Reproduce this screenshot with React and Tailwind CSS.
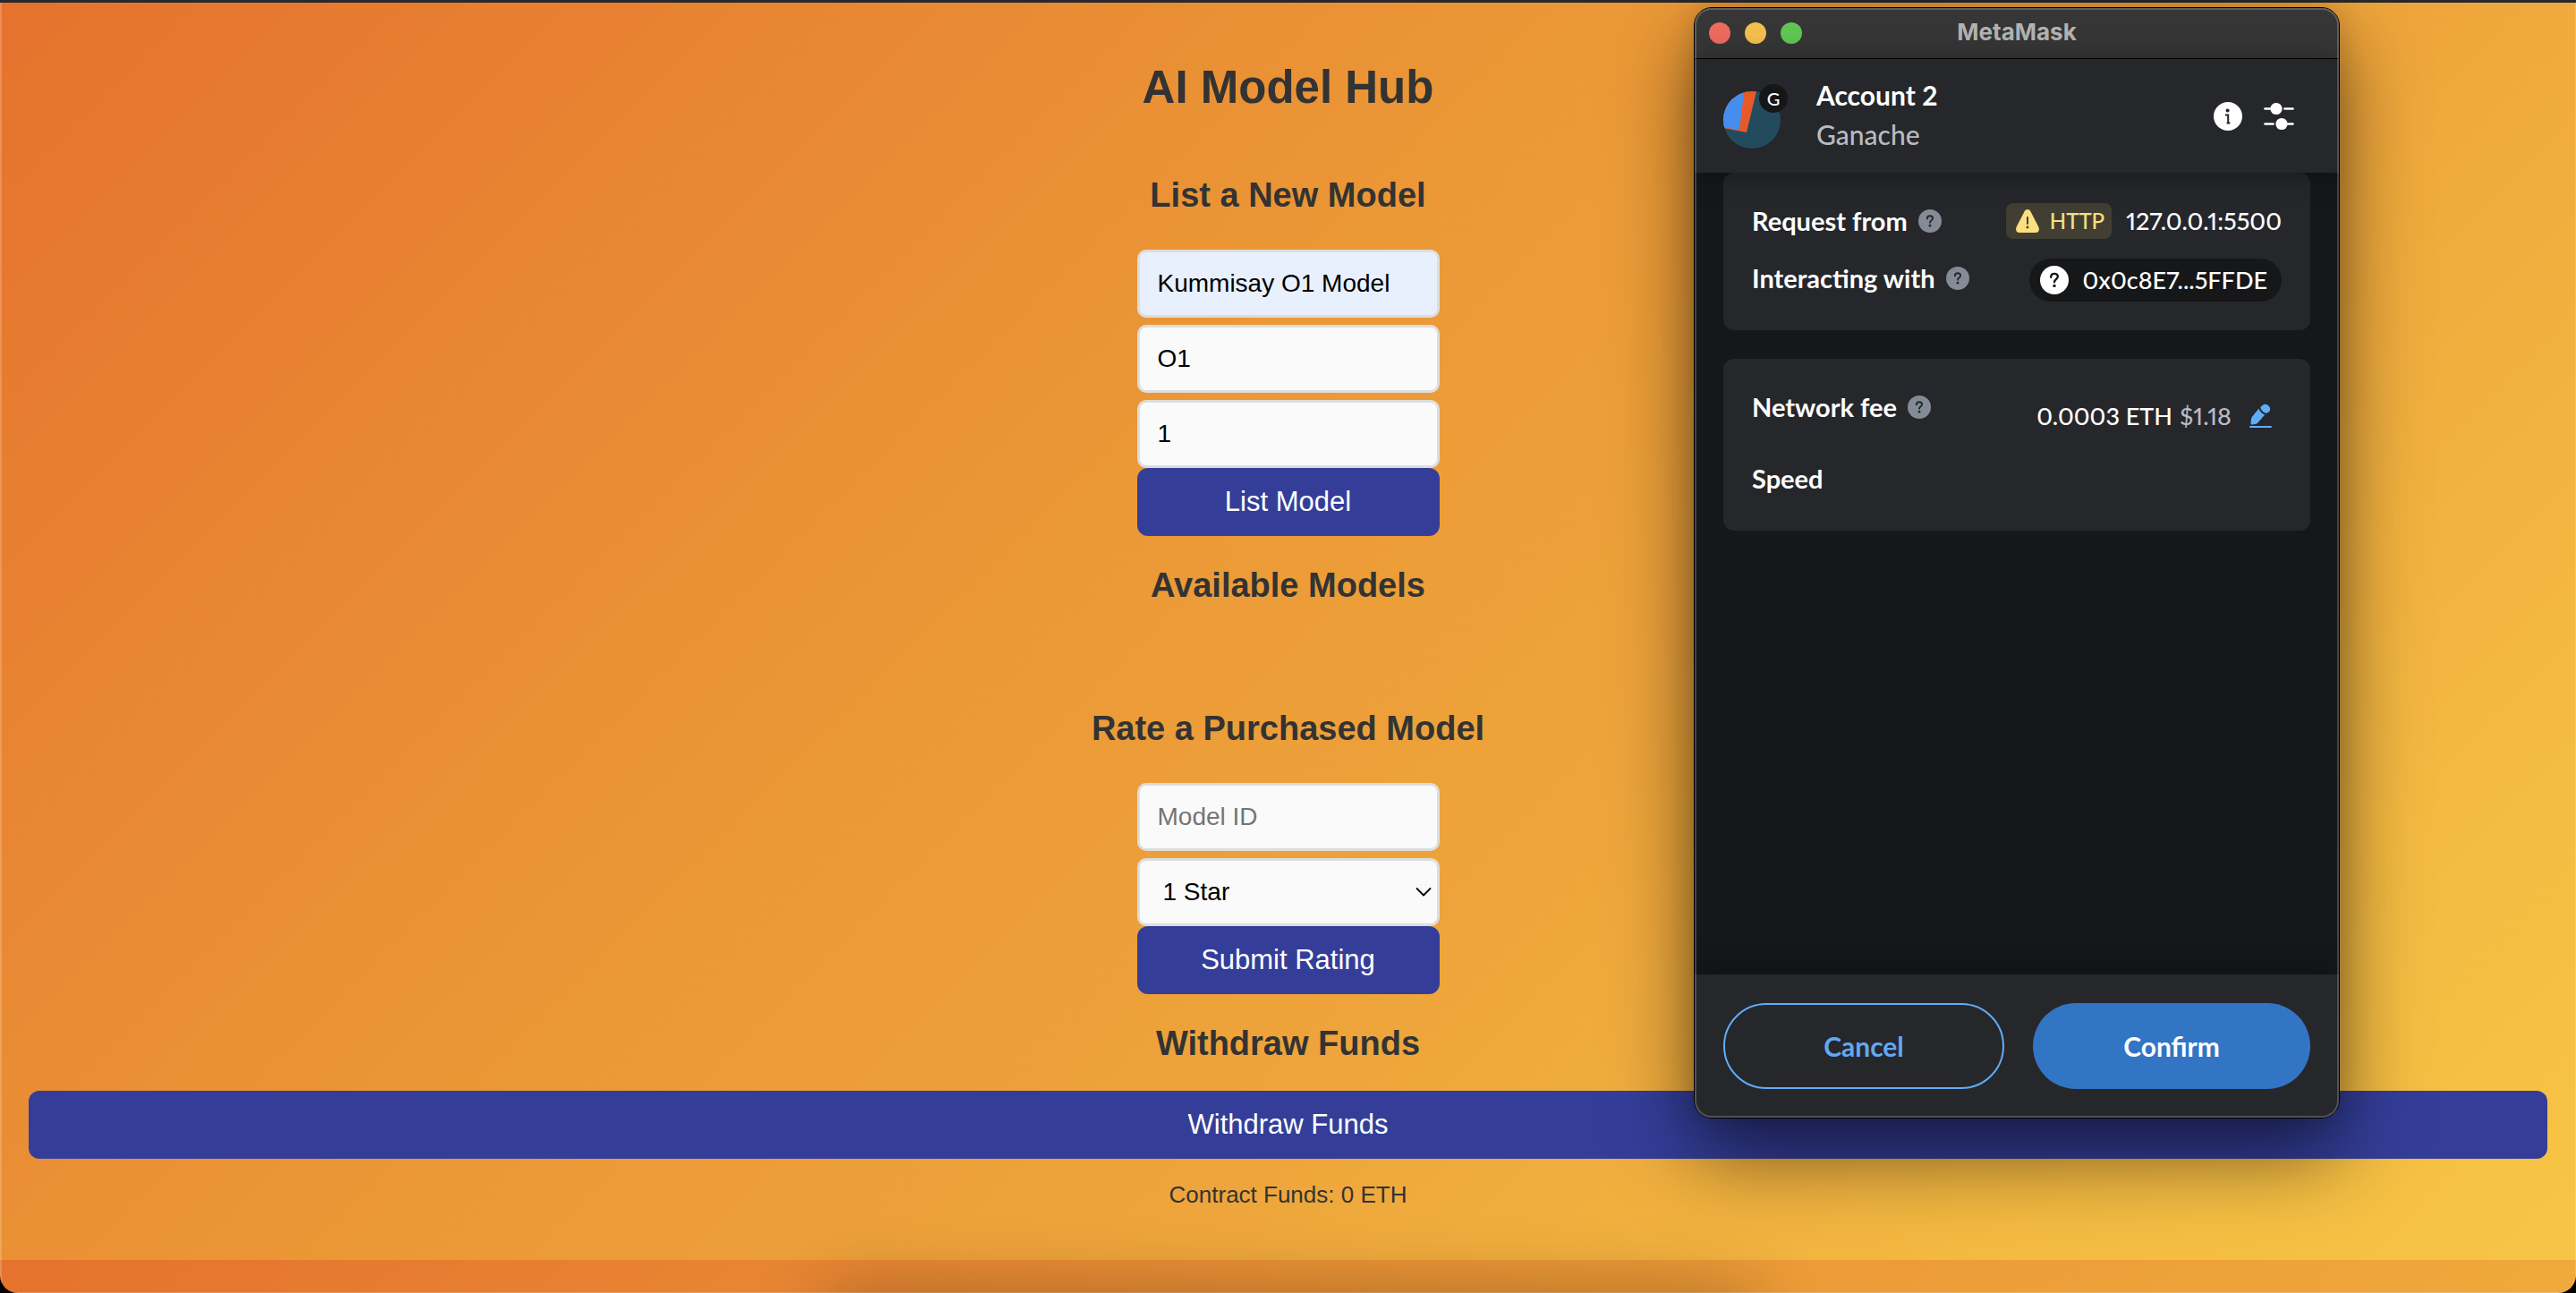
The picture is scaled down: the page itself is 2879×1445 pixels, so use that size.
import React from "react";

const inputClass =
  "block h-[76px] w-full rounded-[10px] border-[3px] border-[#dddddd] bg-[#fafafa] px-5 text-[28px] text-black outline-none placeholder:text-[#757575]";
const buttonClass =
  "block h-[76px] w-full rounded-[12px] bg-[#343e99] text-center text-[31px] text-white";

function SectionHeading({ children }) {
  return (
    <h2 className="mt-8 mb-[30px] text-center text-[38px] leading-[46px] font-bold text-[#333333]">
      {children}
    </h2>
  );
}

function HubPage() {
  return (
    <main className="px-8 pt-[65px] pb-12 font-['Liberation_Sans',Arial,sans-serif] text-[#333333]">
      <h1 className="text-center text-[51px] leading-[60px] font-bold">AI Model Hub</h1>

      <section className="pt-[35px]">
        <SectionHeading>List a New Model</SectionHeading>
        <form className="mx-auto w-[338px] pt-2" onSubmit={(e) => e.preventDefault()}>
          <div className="flex flex-col gap-2">
            <input
              aria-label="Model name"
              defaultValue="Kummisay O1 Model"
              className="block h-[76px] w-full rounded-[10px] border-[3px] border-[#dddddd] bg-[#e8f0fe] px-5 text-[28px] text-black outline-none"
            />
            <input aria-label="Model description" defaultValue="O1" className={inputClass} />
            <input aria-label="Price in ETH" defaultValue="1" inputMode="decimal" className={inputClass} />
          </div>
          <button className={buttonClass}>List Model</button>
        </form>
      </section>

      <section className="pb-[82px]">
        <SectionHeading>Available Models</SectionHeading>
      </section>

      <section className="-mt-[30px]">
        <SectionHeading>Rate a Purchased Model</SectionHeading>
        <form className="mx-auto w-[338px] pt-2" onSubmit={(e) => e.preventDefault()}>
          <div className="flex flex-col gap-2">
            <input aria-label="Model ID" placeholder="Model ID" className={inputClass} />
            <div className="relative">
              <select
                aria-label="Rating"
                className="block h-[76px] w-full appearance-none rounded-[10px] border-[3px] border-[#dddddd] bg-[#fafafa] px-[26px] text-[28px] text-black outline-none"
              >
                <option>1 Star</option>
                <option>2 Stars</option>
                <option>3 Stars</option>
                <option>4 Stars</option>
                <option>5 Stars</option>
              </select>
              <svg
                className="pointer-events-none absolute top-8 right-[9px]"
                width="18"
                height="12"
                viewBox="0 0 18 12"
                fill="none"
                stroke="#000"
                strokeWidth="1.8"
                strokeLinecap="round"
                strokeLinejoin="round"
              >
                <path d="M1.5 2 L9 9.5 L16.5 2" />
              </svg>
            </div>
          </div>
          <button className={buttonClass}>Submit Rating</button>
        </form>
      </section>

      <section>
        <SectionHeading>Withdraw Funds</SectionHeading>
        <button className={buttonClass}>Withdraw Funds</button>
        <p className="mt-6 text-center text-[26px] leading-8">Contract Funds: 0 ETH</p>
      </section>
    </main>
  );
}

function QuestionIcon({ size, disc, mark }) {
  return (
    <svg width={size} height={size} viewBox="0 0 26 26" className="shrink-0" aria-hidden="true">
      <circle cx="13" cy="13" r="13" fill={disc} />
      <path
        d="M9.9 10.4 C9.9 8.5 11.2 7.2 13 7.2 C14.9 7.2 16.1 8.4 16.1 10 C16.1 12.2 13 12.2 13 14.8"
        fill="none"
        stroke={mark}
        strokeWidth="1.9"
        strokeLinecap="round"
      />
      <circle cx="13" cy="18.2" r="1.4" fill={mark} />
    </svg>
  );
}

function AccountAvatar() {
  return (
    <div className="relative size-16 shrink-0">
      <svg width="64" height="64" viewBox="0 0 64 64" aria-hidden="true">
        <defs>
          <clipPath id="disc">
            <circle cx="32" cy="32" r="32" />
          </clipPath>
        </defs>
        <g clipPath="url(#disc)">
          <rect width="64" height="64" fill="#224c5e" />
          <path d="M0 -4 H38 L26 46 L0 41 Z" fill="#e8592a" />
          <path d="M-2 -6 H24 L18 43 L-2 40 Z" fill="#468eee" />
        </g>
      </svg>
      <span className="absolute -top-2 -right-2 flex size-8 items-center justify-center rounded-full bg-[#141618] text-[20px] leading-none font-medium text-white">
        G
      </span>
    </div>
  );
}

function InfoIcon() {
  return (
    <svg width="32" height="32" viewBox="0 0 32 32" aria-hidden="true">
      <circle cx="16" cy="16" r="16" fill="#fff" />
      <circle cx="15.6" cy="9.6" r="2" fill="#26272b" />
      <path d="M13 14.4 H16.2 V23.4 M14.6 23.4 H18.4" fill="none" stroke="#26272b" strokeWidth="2" />
    </svg>
  );
}

function SlidersIcon() {
  return (
    <svg width="34" height="32" viewBox="0 0 34 32" aria-hidden="true">
      <g stroke="#fff" strokeWidth="2.6" strokeLinecap="round">
        <path d="M1.5 7.5 H7" />
        <path d="M23.5 7.5 H32.5" />
        <path d="M1.5 24.5 H10.5" />
        <path d="M27 24.5 H32.5" />
      </g>
      <circle cx="14" cy="7.5" r="6.6" fill="#fff" />
      <circle cx="20" cy="24.5" r="6.6" fill="#fff" />
    </svg>
  );
}

function WarningIcon() {
  return (
    <svg width="26" height="26" viewBox="0 0 26 26" aria-hidden="true">
      <path
        d="M9.6 2.2 C11.2 -0.6 14.8 -0.6 16.4 2.2 L25.3 19.6 C26.8 22.8 25.4 26 22 26 H4 C0.6 26 -0.8 22.8 0.7 19.6 Z"
        fill="#fbdf80"
      />
      <path d="M13 9 V16" stroke="#413f33" strokeWidth="2" strokeLinecap="round" />
      <circle cx="13" cy="20" r="1.4" fill="#413f33" />
    </svg>
  );
}

function EditIcon() {
  return (
    <svg width="26" height="28" viewBox="0 0 26 28" aria-hidden="true" fill="#5fadf9">
      <path d="M10.6 5.6 C11.4 8.6 13.6 11.2 17.2 12.4 L9.6 21.2 C8.6 22.3 7.4 22.8 6 23.1 L3.6 23.5 C2.2 23.7 1.3 22.8 1.5 21.4 L1.9 17.9 C2 16.6 2.6 15.3 3.4 14.3 Z" />
      <path d="M12.2 4 L14.6 1.9 C16.8 0.3 19.6 0.6 21.4 2.4 C23.6 4.4 23.8 7 22.2 9 L18.9 11 C15.6 10.2 12.9 7.4 12.2 4 Z" />
      <rect x="0" y="25" width="25" height="2" rx="1" />
    </svg>
  );
}

function InfoLabel({ children }) {
  return (
    <span className="flex items-center gap-3 text-[29px] font-bold">
      {children}
      <QuestionIcon size={26} disc="#858b96" mark="#26272b" />
    </span>
  );
}

function WalletWindow() {
  return (
    <div
      role="dialog"
      aria-label="MetaMask"
      className="absolute top-2 right-[264px] w-[722px] rounded-[20px] border border-black font-['Lato',sans-serif] text-[27px] leading-[44px] text-white proportional-nums shadow-[0_40px_90px_rgba(0,0,0,0.55),0_0_30px_rgba(0,0,0,0.15)]"
    >
      <div className="overflow-hidden rounded-[19px] bg-[#161719]">
        <div className="relative z-10 flex h-[57px] items-center border-b border-black bg-[#363636] px-4">
          <div className="flex flex-1 gap-4">
            <button aria-label="Close" className="size-6 rounded-full bg-[#ed6a5f]" />
            <button aria-label="Minimize" className="size-6 rounded-full bg-[#f5bf4f]" />
            <button aria-label="Zoom" className="size-6 rounded-full bg-[#61c554]" />
          </div>
          <h2 className="pb-0.5 font-['Inter',sans-serif] text-[26px] leading-8 font-bold text-[#b3b3b3]">MetaMask</h2>
          <div className="flex-1" />
        </div>

        <header className="relative z-10 flex h-[127px] items-center bg-[#26272b] px-8 shadow-[0_2px_32px_rgba(0,0,0,0.35)]">
          <div className="pt-2">
            <AccountAvatar />
          </div>
          <div className="ml-10 flex-1 pb-1 text-[30px]">
            <p className="font-bold">Account 2</p>
            <p className="font-medium text-[#b9bbc0]">Ganache</p>
          </div>
          <div className="flex items-center gap-6 pr-[18px]">
            <button aria-label="Details">
              <InfoIcon />
            </button>
            <button aria-label="Advanced settings">
              <SlidersIcon />
            </button>
          </div>
        </header>

        <div className="h-[896px] px-8">
          <section className="rounded-[12px] bg-[#26272b] px-8 pt-8 pb-8">
            <div className="flex h-11 items-center justify-between">
              <InfoLabel>Request from</InfoLabel>
              <span className="flex items-center gap-4 font-medium">
                <span className="flex h-10 items-center gap-3 rounded-[8px] bg-[#413f33] pr-2 pl-[11px] text-[24px] text-[#fbdf80]">
                  <WarningIcon />
                  HTTP
                </span>
                127.0.0.1:5500
              </span>
            </div>
            <div className="mt-5 flex h-12 items-start justify-between">
              <InfoLabel>Interacting with</InfoLabel>
              <button className="flex h-12 items-center gap-4 rounded-full bg-[#161719] pr-4 pl-3 font-medium">
                <QuestionIcon size={32} disc="#ffffff" mark="#161719" />
                0x0c8E7...5FFDE
              </button>
            </div>
          </section>

          <section className="mt-8 h-48 rounded-[12px] bg-[#26272b] px-8 pt-8">
            <div className="flex h-16 items-start justify-between">
              <InfoLabel>Network fee</InfoLabel>
              <span className="flex items-center gap-2 pt-[10px] pr-2.5 font-medium">
                0.0003 ETH
                <span className="text-[#b9bbc0]">$1.18</span>
                <button aria-label="Edit network fee" className="ml-3">
                  <EditIcon />
                </button>
              </span>
            </div>
            <p className="mt-4 text-[29px] font-bold">Speed</p>
          </section>
        </div>

        <footer className="relative z-10 flex gap-8 bg-[#26272b] px-8 pt-8 pb-8 text-[30px] font-bold shadow-[0_-2px_32px_rgba(0,0,0,0.35)]">
          <button className="h-24 flex-1 rounded-full border-2 border-[#5fadf9] text-[#62a8f3]">Cancel</button>
          <button className="h-24 flex-1 rounded-full bg-[#3275c4] text-white">Confirm</button>
        </footer>
      </div>
      <div className="pointer-events-none absolute inset-0 z-20 rounded-[19px] border-2 border-white/20" />
    </div>
  );
}

export default function App() {
  return (
    <div className="h-screen overflow-hidden bg-black">
      <div className="relative flex h-full flex-col overflow-hidden rounded-b-[20px]">
        <div className="h-[3px] shrink-0 bg-[#29282d]" />
        <div className="flex-1 bg-[linear-gradient(135deg,#e5722d,#e98b34_27%,#eb9836_42%,#eea53b_63%,#f4bb42_86%,#f7c545)] bg-[length:100%_1405px] shadow-[inset_2px_0_0_rgba(255,255,255,0.2),inset_-1px_-1px_0_rgba(255,255,255,0.2)]">
          <HubPage />
        </div>
        <div className="pointer-events-none absolute top-full left-1/2 h-20 w-[1036px] -translate-x-1/2 shadow-[0_0_80px_rgba(0,0,0,0.28)]" />
        <WalletWindow />
      </div>
    </div>
  );
}
